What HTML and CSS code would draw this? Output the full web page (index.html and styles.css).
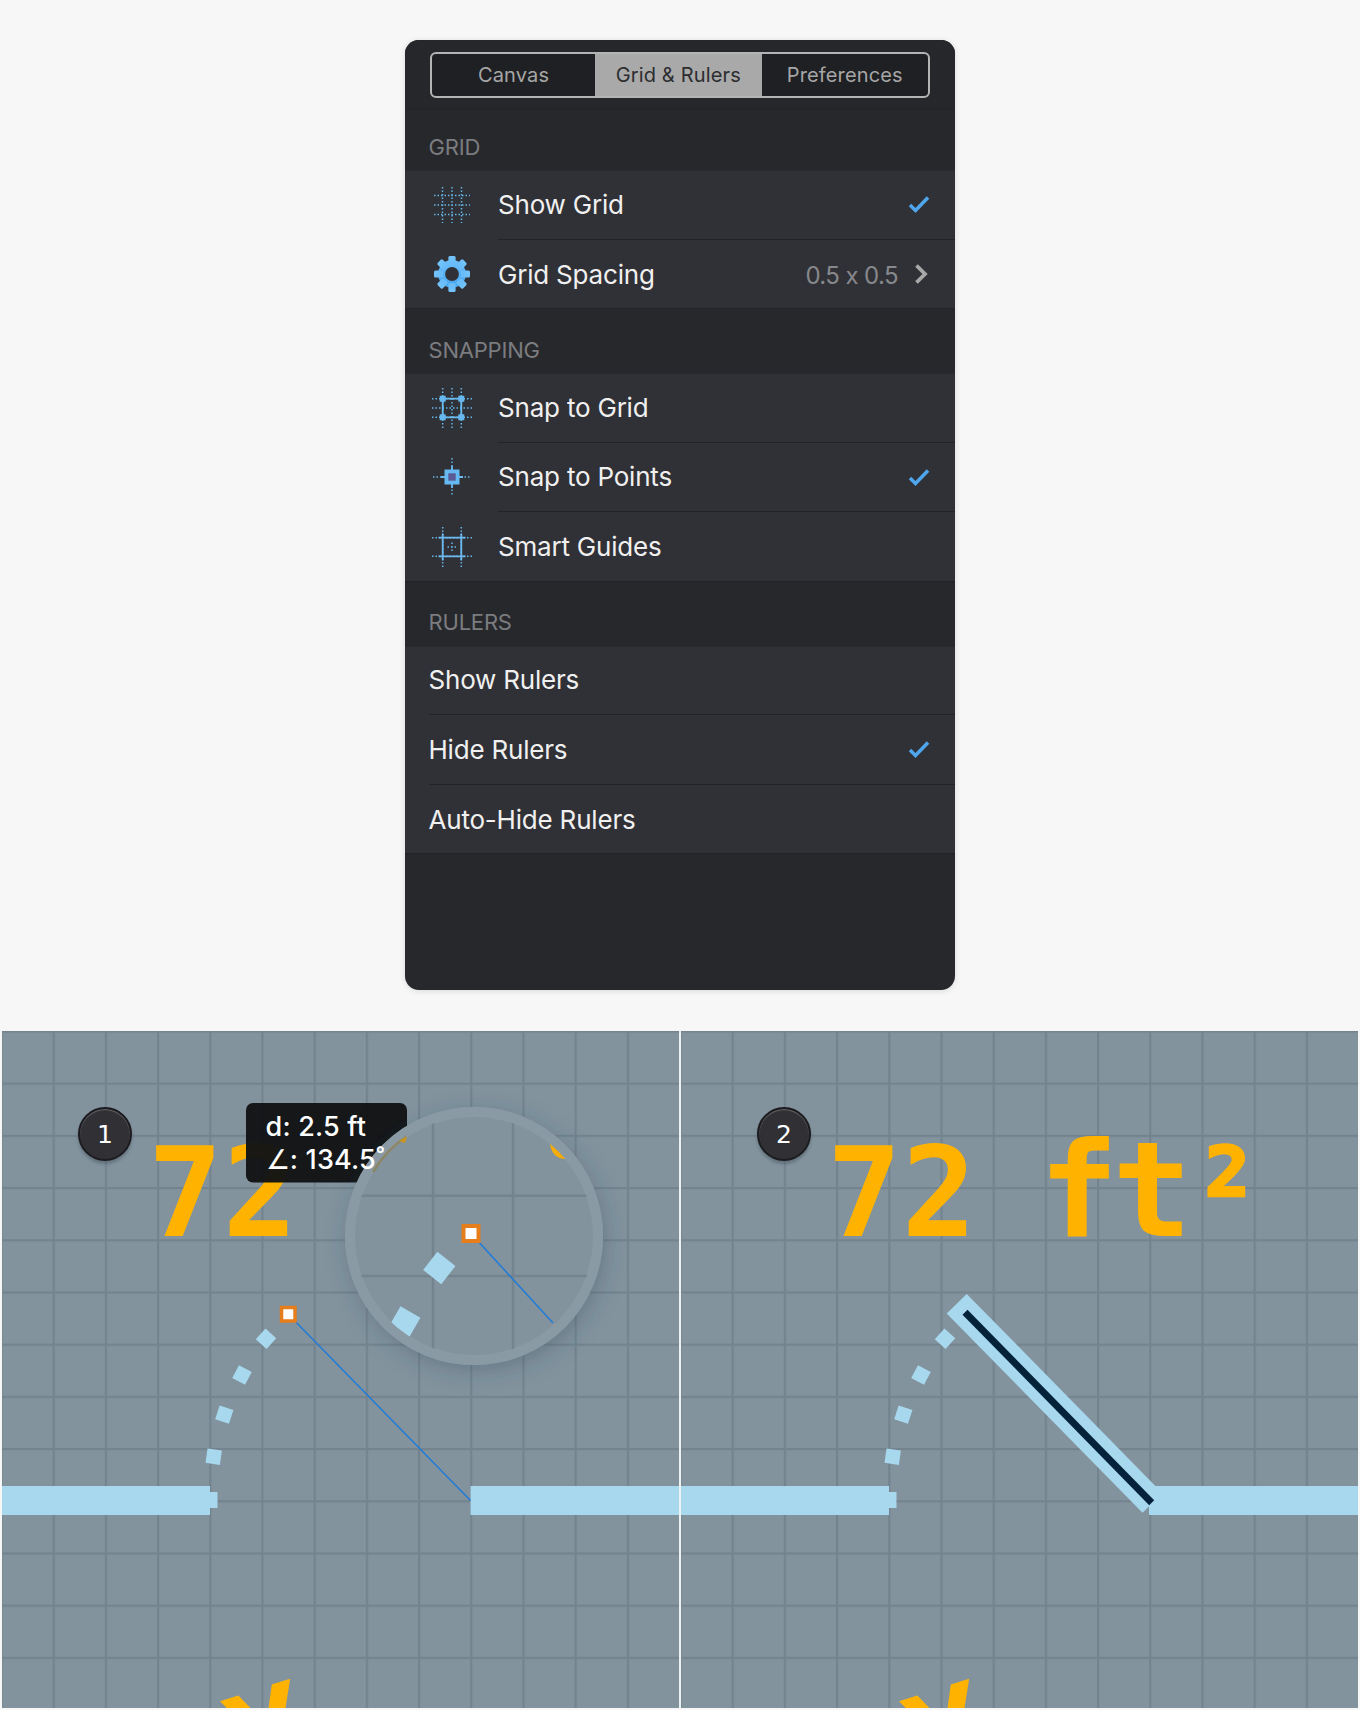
FILE: index.html
```html
<!DOCTYPE html>
<html lang="en">
<head>
<meta charset="utf-8">
<title>Grid &amp; Rulers</title>
<link rel="stylesheet" href="styles.css">
</head>
<body>
<svg class="defs" width="0" height="0" aria-hidden="true">
  <defs>
    <linearGradient id="gearFill" gradientUnits="userSpaceOnUse" x1="0" y1="2" x2="0" y2="38">
      <stop offset="0" stop-color="#74c4fb"/>
      <stop offset="1" stop-color="#3f9fec"/>
    </linearGradient>
    <filter id="magShadow" x="-30%" y="-30%" width="160%" height="160%">
      <feDropShadow dx="3" dy="6" stdDeviation="11" flood-color="#33424e" flood-opacity=".3"/>
    </filter>
    <pattern id="gridLines" x="0.400" y="1030.400" width="52.200" height="52.200" patternUnits="userSpaceOnUse">
      <rect class="grid-line" width="2.200" height="52.200"/>
      <rect class="grid-line" width="52.200" height="2.200"/>
    </pattern>
    <clipPath id="magClip"><circle cx="474" cy="1236" r="119.500"/></clipPath>
    <clipPath id="cropCanvas"><rect x="2" y="1031" width="677" height="677"/></clipPath>
  </defs>
</svg>

<main class="panel">
  <header class="panel-head">
    <div class="segments">
      <div class="segment segment-first">Canvas</div>
      <div class="segment segment-on">Grid &amp; Rulers</div>
      <div class="segment">Preferences</div>
    </div>
  </header>

  <section class="group group-first">
    <h2 class="group-title">GRID</h2>
    <div class="rows">
      <div class="row row-icon">
        <svg class="row-glyph" viewBox="0 0 40 40">
          <path class="dots" d="M10.500 2V38M20 2V38M29.500 2V38M2 10.500H38M2 20H38M2 29.500H38"/>
        </svg>
        <div class="row-body"><span class="row-label">Show Grid</span>
          <svg class="check" viewBox="0 0 22 18"><path d="M2 10l5.500 5.500L20 2.500"/></svg>
        </div>
      </div>
      <div class="row row-icon">
        <svg class="row-glyph" viewBox="0 0 40 40">
          <circle class="gear-body" cx="20" cy="20" r="10.400"/>
          <g class="gear-teeth">
            <rect x="16.400" y="2" width="7.200" height="9" rx="1.500"/>
            <rect x="16.400" y="2" width="7.200" height="9" rx="1.500" transform="rotate(45 20 20)"/>
            <rect x="16.400" y="2" width="7.200" height="9" rx="1.500" transform="rotate(90 20 20)"/>
            <rect x="16.400" y="2" width="7.200" height="9" rx="1.500" transform="rotate(135 20 20)"/>
            <rect x="16.400" y="2" width="7.200" height="9" rx="1.500" transform="rotate(180 20 20)"/>
            <rect x="16.400" y="2" width="7.200" height="9" rx="1.500" transform="rotate(225 20 20)"/>
            <rect x="16.400" y="2" width="7.200" height="9" rx="1.500" transform="rotate(270 20 20)"/>
            <rect x="16.400" y="2" width="7.200" height="9" rx="1.500" transform="rotate(315 20 20)"/>
          </g>
        </svg>
        <div class="row-body"><span class="row-label">Grid Spacing</span>
          <span class="row-value">0.5 x 0.5</span>
          <svg class="chevron" viewBox="0 0 14 20"><path d="M2.500 1.500L11 10l-8.500 8.500"/></svg>
        </div>
      </div>
    </div>
  </section>

  <section class="group">
    <h2 class="group-title">SNAPPING</h2>
    <div class="rows">
      <div class="row row-icon">
        <svg class="row-glyph" viewBox="0 0 40 40">
          <path class="dots" d="M10.700 0V40M20 0V40M29.300 0V40M0 10.700H40M0 20H40M0 29.300H40"/>
          <path class="solid" d="M10.700 10.700H29.300V29.300H10.700Z"/>
          <path class="fill" d="M7.700 7.700h6v6h-6zM26.300 7.700h6v6h-6zM7.700 26.300h6v6h-6zM26.300 26.300h6v6h-6z"/>
        </svg>
        <div class="row-body"><span class="row-label">Snap to Grid</span></div>
      </div>
      <div class="row row-icon">
        <svg class="row-glyph" viewBox="0 0 40 40">
          <path class="dots" d="M1 20H39M20 1V39"/>
          <path class="solid" d="M9 20H31M20 9V31"/>
          <rect class="fill" x="12.500" y="12.500" width="15" height="15"/>
          <rect class="core" x="16.300" y="16.300" width="7.400" height="7.400"/>
        </svg>
        <div class="row-body"><span class="row-label">Snap to Points</span>
          <svg class="check" viewBox="0 0 22 18"><path d="M2 10l5.500 5.500L20 2.500"/></svg>
        </div>
      </div>
      <div class="row row-icon">
        <svg class="row-glyph" viewBox="0 0 40 40">
          <path class="dots" d="M10.700 0V40M29.300 0V40M0 10.700H40M0 29.300H40M15.500 20H24.500M20 15.500V24.500"/>
          <path class="solid" d="M6.500 10.700H33.500M6.500 29.300H33.500M10.700 6.500V33.500M29.300 6.500V33.500"/>
        </svg>
        <div class="row-body"><span class="row-label">Smart Guides</span></div>
      </div>
    </div>
  </section>

  <section class="group">
    <h2 class="group-title">RULERS</h2>
    <div class="rows">
      <div class="row"><div class="row-body"><span class="row-label">Show Rulers</span></div></div>
      <div class="row"><div class="row-body"><span class="row-label">Hide Rulers</span>
        <svg class="check" viewBox="0 0 22 18"><path d="M2 10l5.500 5.500L20 2.500"/></svg></div></div>
      <div class="row"><div class="row-body"><span class="row-label">Auto-Hide Rulers</span></div></div>
    </div>
  </section>
</main>

<div class="gallery">
  <figure class="canvas">
    <div class="badge">1</div>
    <svg class="drawing" viewBox="2 1031 677 677">
      <rect x="2" y="1031" width="677" height="677" fill="url(#gridLines)"/>
      <text class="area" x="148" y="1236">72</text>
      <g clip-path="url(#cropCanvas)"><text class="area" transform="translate(255 1690) rotate(-18)" x="0" y="90.400" text-anchor="middle">Y</text></g>
      <rect class="wall" x="2" y="1486" width="208" height="29"/>
      <rect class="wall" x="208" y="1492" width="9.500" height="16"/>
      <rect class="wall" x="470.500" y="1486" width="209" height="29"/>
      <g class="wall">
        <rect x="-7.250" y="-7.250" width="14.500" height="14.500" transform="translate(266 1338.700) rotate(42)"/>
        <rect x="-7.250" y="-7.250" width="14.500" height="14.500" transform="translate(242 1375) rotate(28)"/>
        <rect x="-7.250" y="-7.250" width="14.500" height="14.500" transform="translate(224.300 1414.700) rotate(18)"/>
        <rect x="-7.250" y="-7.250" width="14.500" height="14.500" transform="translate(213.700 1456.700) rotate(8)"/>
      </g>
      <line class="measure" x1="288" y1="1314" x2="470.500" y2="1500.500"/>
      <rect class="handle" x="281.500" y="1307.500" width="13.500" height="13.500"/>

      <rect class="tip" x="246" y="1103" width="161" height="79.500" rx="7"/>

      <circle class="mag-body" cx="474" cy="1236" r="129" filter="url(#magShadow)"/>
      <circle class="mag-ring" cx="474" cy="1236" r="124"/>
      <path class="mag-ghost" d="M373 1172Q386 1150 406 1137"/>
      <path class="mag-ghost-tip" d="M399 1141Q403 1138 407 1136.500L405 1143z"/>
      <g clip-path="url(#magClip)">
        <path class="mag-grid" d="M433 1100V1360M513 1100V1360M340 1195.700H600M340 1276H600"/>
        <path class="area-bit" d="M550 1144L575 1140L566 1159Q552 1158.500 550 1144z"/>
        <g class="wall">
          <rect x="-11.500" y="-11.500" width="23" height="23" transform="translate(439.300 1268) rotate(38)"/>
          <rect x="-11.500" y="-11.500" width="23" height="23" transform="translate(404.700 1322) rotate(30)"/>
        </g>
        <line class="measure" x1="471" y1="1233.500" x2="553" y2="1323"/>
        <rect class="handle handle-big" x="463.500" y="1226" width="15" height="15"/>
      </g>
      <text class="tip-text" x="265.500" y="1136">d: 2.5 ft</text>
      <text class="tip-text" x="265.500" y="1168.500">∠: 134.5˚</text>
    </svg>
  </figure>
  <div class="divider"></div>
  <figure class="canvas">
    <div class="badge">2</div>
    <svg class="drawing" viewBox="2 1031 677 677">
      <rect x="2" y="1031" width="677" height="677" fill="url(#gridLines)"/>
      <text class="area" x="148" y="1236">72 <tspan class="area-ft" x="360">ft</tspan></text>
      <text class="area area-sup" transform="translate(515 1236) scale(.88 1)">²</text>
      <g clip-path="url(#cropCanvas)"><text class="area" transform="translate(255 1690) rotate(-18)" x="0" y="90.400" text-anchor="middle">Y</text></g>
      <rect class="wall" x="2" y="1486" width="208" height="29"/>
      <rect class="wall" x="208" y="1492" width="9.500" height="16"/>
      <rect class="wall" x="470" y="1486" width="209" height="29"/>
      <g class="wall">
        <rect x="-7.250" y="-7.250" width="14.500" height="14.500" transform="translate(266 1338.700) rotate(42)"/>
        <rect x="-7.250" y="-7.250" width="14.500" height="14.500" transform="translate(242 1375) rotate(28)"/>
        <rect x="-7.250" y="-7.250" width="14.500" height="14.500" transform="translate(224.300 1414.700) rotate(18)"/>
        <rect x="-7.250" y="-7.250" width="14.500" height="14.500" transform="translate(213.700 1456.700) rotate(8)"/>
      </g>
      <line class="door" x1="277.700" y1="1303.700" x2="473.500" y2="1503"/>
      <line class="door-core" x1="286" y1="1312.300" x2="472.700" y2="1502.700"/>
    </svg>
  </figure>
</div>
</body>
</html>
```

FILE: styles.css
```css
* { box-sizing: border-box; }
html, body { margin: 0; padding: 0; }
body {
  width: 1360px;
  height: 1710px;
  background: #f7f7f7;
  font-family: Inter, "Liberation Sans", sans-serif;
  overflow: hidden;
}
.defs { position: absolute; }

.panel {
  width: 550px;
  height: 950px;
  margin: 40px auto 0;
  background: #27282c;
  border-radius: 14px;
  overflow: hidden;
  box-shadow: 0 1px 6px rgba(0, 0, 0, .12);
}
.panel-head {
  height: 69.500px;
  padding: 12px 25px 0 25px;
  background: #26272a;
  border-bottom: 1px solid #232427;
}
.segments {
  display: flex;
  height: 46px;
  border: 2px solid #b4b4b4;
  border-radius: 6px;
  background: #1f2023;
  overflow: hidden;
}
.segment {
  flex: 1;
  display: flex;
  align-items: center;
  justify-content: center;
  color: #a6a6a6;
  font-size: 20px;
  letter-spacing: .15px;
}
.segment-first {
  flex: none;
  width: 163px;
}
.segment-on {
  background: #a9a9a9;
  color: #2c2d30;
}

.group-title {
  margin: 0;
  height: 64px;
  padding: 27.500px 0 0 23.500px;
  color: #7b7c7f;
  font-size: 22px;
  line-height: 26px;
  font-weight: 400;
  letter-spacing: -.2px;
}
.group-first .group-title { height: 60.500px; padding-top: 24px; }

.rows {
  background: #303136;
  box-shadow: inset 0 1px 0 #2a2b2e, inset 0 -1px 0 #232427;
}
.row {
  display: flex;
  align-items: stretch;
  height: 69.500px;
  padding-left: 23.500px;
}
.row-icon { padding-left: 27px; }
.row-glyph {
  flex: none;
  width: 40px;
  height: 40px;
  align-self: center;
  margin-right: 26px;
}
.row-body {
  flex: 1;
  display: flex;
  align-items: center;
  border-bottom: 1px solid #232427;
  padding-right: 25px;
}
.row:last-child .row-body { border-bottom: 0; }
.row-label {
  flex: 1;
  color: #f0f0f0;
  font-size: 26px;
  letter-spacing: -.2px;
}
.row-value {
  color: #87888b;
  font-size: 24px;
  letter-spacing: -.6px;
  margin-right: 16px;
  padding-top: 3px;
}
.check {
  flex: none;
  width: 22px;
  height: 18px;
  fill: none;
  stroke: #4fa6ec;
  stroke-width: 3.500;
}
.chevron {
  flex: none;
  width: 14px;
  height: 20px;
  margin-right: 2px;
  fill: none;
  stroke: #a8a8a8;
  stroke-width: 3.800;
}
.dots {
  fill: none;
  stroke: #62b6e8;
  stroke-width: 1.500;
  stroke-dasharray: 1.500 2;
}
.solid {
  fill: none;
  stroke: #6cbbf0;
  stroke-width: 1.800;
}
.fill { fill: #66b8f0; }
.core { fill: #5c5a96; }
.gear-body {
  fill: none;
  stroke: url(#gearFill);
  stroke-width: 7;
}
.gear-teeth { fill: url(#gearFill); }

.gallery {
  display: flex;
  width: 1356px;
  height: 677px;
  margin: 41px 0 0 2px;
}
.canvas {
  position: relative;
  flex: none;
  width: 677px;
  height: 677px;
  margin: 0;
  background: #82939e;
}
.divider {
  flex: none;
  width: 2px;
  background: #eef1f3;
}
.drawing {
  display: block;
  width: 677px;
  height: 677px;
}
.badge {
  position: absolute;
  left: 76px;
  top: 76px;
  width: 54px;
  height: 54px;
  display: flex;
  align-items: center;
  justify-content: center;
  border-radius: 50%;
  background: #303035;
  border: 2px solid #1c1c20;
  box-shadow: inset 0 1px 1px #6b6b70, 0 3px 3px rgba(50, 60, 70, .35);
  color: #fff;
  font-family: "DejaVu Sans", sans-serif;
  font-size: 25px;
}
.grid-line { fill: #73848f; }
.area {
  fill: #ffb300;
  font-family: "DejaVu Sans Mono", monospace;
  font-weight: 700;
  font-size: 124px;
}
.area-ft {
  font-size: 132px;
  letter-spacing: -6px;
}
.area-sup {
  stroke: #ffb300;
  stroke-width: 2.500;
}
.area-bit { fill: #f5ac07; }
.wall { fill: #a8d8ee; }
.measure {
  stroke: #1f7bd8;
  stroke-width: 1.500;
}
.handle {
  fill: #fff;
  stroke: #e67e1c;
  stroke-width: 3.500;
}
.handle-big { stroke-width: 4; }
.tip {
  fill: #111214;
  fill-opacity: .96;
}
.tip-text {
  fill: #fff;
  font-family: Inter, sans-serif;
  font-weight: 500;
  font-size: 27px;
  letter-spacing: .2px;
}
.mag-body { fill: #82939e; }
.mag-ring {
  fill: #82939e;
  stroke: #8a9aa5;
  stroke-width: 10;
}
.mag-ghost {
  fill: none;
  stroke: #8f7a3c;
  stroke-width: 2.500;
  opacity: .6;
}
.mag-ghost-tip { fill: #c8951f; }
.mag-grid {
  fill: none;
  stroke: #73848f;
  stroke-width: 2.500;
}
.door {
  stroke: #a8d8ee;
  stroke-width: 28;
}
.door-core {
  stroke: #04223a;
  stroke-width: 7;
}
```
